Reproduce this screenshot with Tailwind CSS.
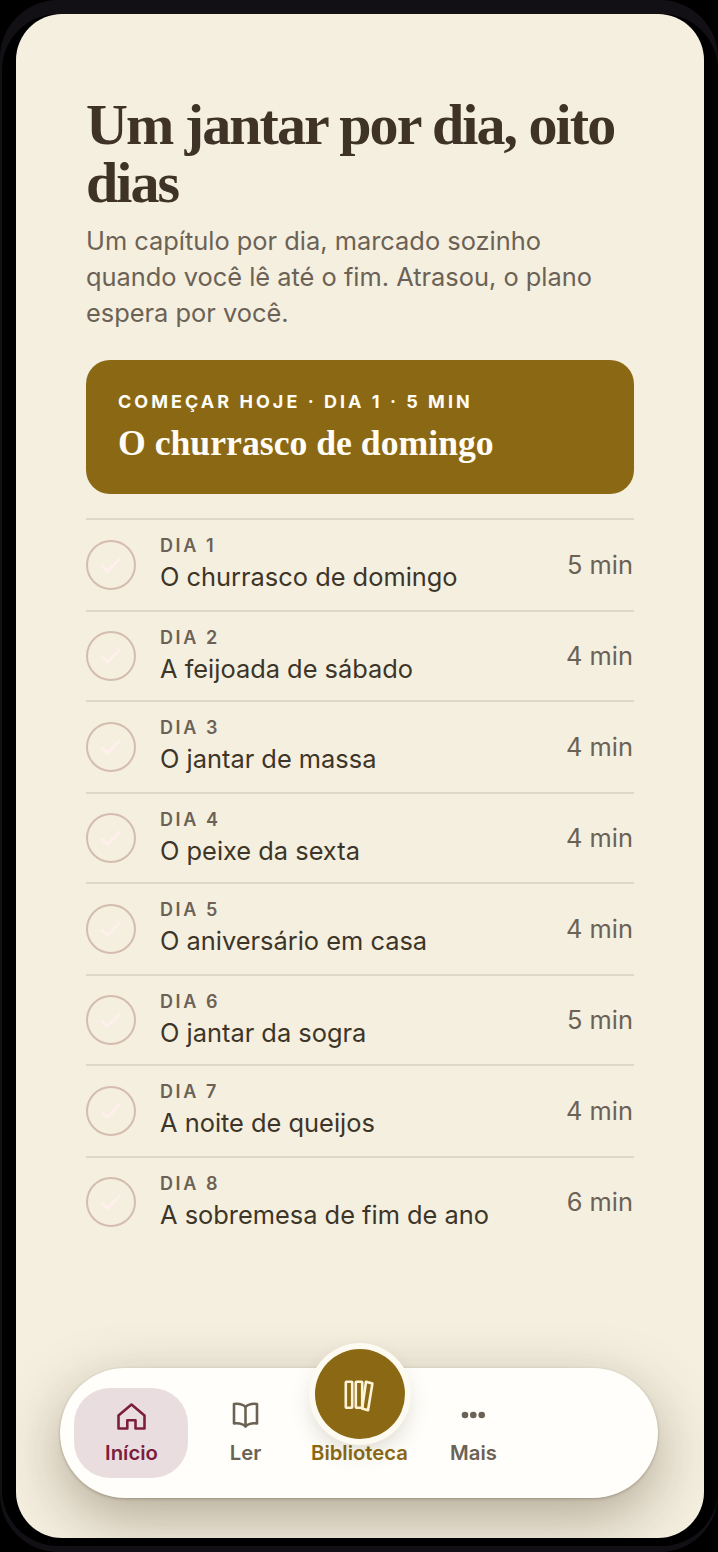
<!DOCTYPE html>
<html lang="pt-BR">
<head>
    <meta charset="UTF-8">
    <meta name="viewport" content="width=device-width, initial-scale=1.0">
    <title>Um jantar por dia, oito dias</title>
    <script src="https://cdn.jsdelivr.net/npm/@tailwindcss/browser@4"></script>
</head>
<body class="bg-black h-[1552px] overflow-hidden font-['Inter','Liberation_Sans',sans-serif]">
    <!-- moldura do aparelho -->
    <div class="h-[1552px] rounded-[58px] bg-[#121014] pt-[14px] pl-[2px] pb-[6px]">
        <div class="h-[1532px] rounded-[56px] bg-black px-[14px] pb-[8px]">
            <!-- tela -->
            <main class="relative h-[1524px] rounded-[46px] overflow-hidden bg-[#f5efe0] px-[70px] pt-[82px]">
                <h1 class="font-['Liberation_Serif',serif] font-bold text-[58px] leading-[58px] tracking-[-1.95px] text-[#3f3226]">Um jantar por dia, oito dias</h1>
                <p class="mt-[11px] text-[25.4px] leading-[36px] text-[#6b6255]">Um capítulo por dia, marcado sozinho quando você lê até o fim. Atrasou, o plano espera por você.</p>

                <div class="mt-[29px] h-[134px] rounded-[24px] bg-[#8b6914] px-[32px] pt-[31px]">
                    <p class="text-[18px] leading-[22px] font-bold tracking-[3.03px] text-[#fffdf6]">COMEÇAR HOJE · DIA 1 · 5 MIN</p>
                    <p class="mt-[8px] font-['Liberation_Serif',serif] font-bold text-[35.7px] leading-[44px] text-[#fffdf6]">O churrasco de domingo</p>
                </div>

                <ul class="mt-[24px]">
                    <li class="flex h-[92px] items-center border-t-2 border-[#ddd7ca]">
                        <span class="flex h-[50px] w-[50px] shrink-0 items-center justify-center rounded-full border-2 border-[#d4bdb0]">
                            <svg class="w-[30px] h-[30px]" viewBox="0 0 24 24" fill="none" stroke="#fff0ec" stroke-width="2.2" stroke-linecap="round" stroke-linejoin="round"><path d="M5 13l4 4 10-10"/></svg>
                        </span>
                        <div class="ml-[24px] flex-1 self-start pt-[15px]">
                            <p class="text-[18px] leading-[22px] font-semibold tracking-[2.6px] text-[#6b6255]">DIA 1</p>
                            <p class="mt-[3.5px] text-[25.4px] leading-[32px] text-[#3d3528]">O churrasco de domingo</p>
                        </div>
                        <span class="mr-[1px] text-[25.4px] text-[#6b6255]">5 min</span>
                    </li>
                    <li class="flex h-[90px] items-center border-t-2 border-[#ddd7ca]">
                        <span class="flex h-[50px] w-[50px] shrink-0 items-center justify-center rounded-full border-2 border-[#d4bdb0]">
                            <svg class="w-[30px] h-[30px]" viewBox="0 0 24 24" fill="none" stroke="#fff0ec" stroke-width="2.2" stroke-linecap="round" stroke-linejoin="round"><path d="M5 13l4 4 10-10"/></svg>
                        </span>
                        <div class="ml-[24px] flex-1 self-start pt-[15px]">
                            <p class="text-[18px] leading-[22px] font-semibold tracking-[2.6px] text-[#6b6255]">DIA 2</p>
                            <p class="mt-[3.5px] text-[25.4px] leading-[32px] text-[#3d3528]">A feijoada de sábado</p>
                        </div>
                        <span class="mr-[1px] text-[25.4px] text-[#6b6255]">4 min</span>
                    </li>
                    <li class="flex h-[92px] items-center border-t-2 border-[#ddd7ca]">
                        <span class="flex h-[50px] w-[50px] shrink-0 items-center justify-center rounded-full border-2 border-[#d4bdb0]">
                            <svg class="w-[30px] h-[30px]" viewBox="0 0 24 24" fill="none" stroke="#fff0ec" stroke-width="2.2" stroke-linecap="round" stroke-linejoin="round"><path d="M5 13l4 4 10-10"/></svg>
                        </span>
                        <div class="ml-[24px] flex-1 self-start pt-[15px]">
                            <p class="text-[18px] leading-[22px] font-semibold tracking-[2.6px] text-[#6b6255]">DIA 3</p>
                            <p class="mt-[3.5px] text-[25.4px] leading-[32px] text-[#3d3528]">O jantar de massa</p>
                        </div>
                        <span class="mr-[1px] text-[25.4px] text-[#6b6255]">4 min</span>
                    </li>
                    <li class="flex h-[90px] items-center border-t-2 border-[#ddd7ca]">
                        <span class="flex h-[50px] w-[50px] shrink-0 items-center justify-center rounded-full border-2 border-[#d4bdb0]">
                            <svg class="w-[30px] h-[30px]" viewBox="0 0 24 24" fill="none" stroke="#fff0ec" stroke-width="2.2" stroke-linecap="round" stroke-linejoin="round"><path d="M5 13l4 4 10-10"/></svg>
                        </span>
                        <div class="ml-[24px] flex-1 self-start pt-[15px]">
                            <p class="text-[18px] leading-[22px] font-semibold tracking-[2.6px] text-[#6b6255]">DIA 4</p>
                            <p class="mt-[3.5px] text-[25.4px] leading-[32px] text-[#3d3528]">O peixe da sexta</p>
                        </div>
                        <span class="mr-[1px] text-[25.4px] text-[#6b6255]">4 min</span>
                    </li>
                    <li class="flex h-[92px] items-center border-t-2 border-[#ddd7ca]">
                        <span class="flex h-[50px] w-[50px] shrink-0 items-center justify-center rounded-full border-2 border-[#d4bdb0]">
                            <svg class="w-[30px] h-[30px]" viewBox="0 0 24 24" fill="none" stroke="#fff0ec" stroke-width="2.2" stroke-linecap="round" stroke-linejoin="round"><path d="M5 13l4 4 10-10"/></svg>
                        </span>
                        <div class="ml-[24px] flex-1 self-start pt-[15px]">
                            <p class="text-[18px] leading-[22px] font-semibold tracking-[2.6px] text-[#6b6255]">DIA 5</p>
                            <p class="mt-[3.5px] text-[25.4px] leading-[32px] text-[#3d3528]">O aniversário em casa</p>
                        </div>
                        <span class="mr-[1px] text-[25.4px] text-[#6b6255]">4 min</span>
                    </li>
                    <li class="flex h-[90px] items-center border-t-2 border-[#ddd7ca]">
                        <span class="flex h-[50px] w-[50px] shrink-0 items-center justify-center rounded-full border-2 border-[#d4bdb0]">
                            <svg class="w-[30px] h-[30px]" viewBox="0 0 24 24" fill="none" stroke="#fff0ec" stroke-width="2.2" stroke-linecap="round" stroke-linejoin="round"><path d="M5 13l4 4 10-10"/></svg>
                        </span>
                        <div class="ml-[24px] flex-1 self-start pt-[15px]">
                            <p class="text-[18px] leading-[22px] font-semibold tracking-[2.6px] text-[#6b6255]">DIA 6</p>
                            <p class="mt-[3.5px] text-[25.4px] leading-[32px] text-[#3d3528]">O jantar da sogra</p>
                        </div>
                        <span class="mr-[1px] text-[25.4px] text-[#6b6255]">5 min</span>
                    </li>
                    <li class="flex h-[92px] items-center border-t-2 border-[#ddd7ca]">
                        <span class="flex h-[50px] w-[50px] shrink-0 items-center justify-center rounded-full border-2 border-[#d4bdb0]">
                            <svg class="w-[30px] h-[30px]" viewBox="0 0 24 24" fill="none" stroke="#fff0ec" stroke-width="2.2" stroke-linecap="round" stroke-linejoin="round"><path d="M5 13l4 4 10-10"/></svg>
                        </span>
                        <div class="ml-[24px] flex-1 self-start pt-[15px]">
                            <p class="text-[18px] leading-[22px] font-semibold tracking-[2.6px] text-[#6b6255]">DIA 7</p>
                            <p class="mt-[3.5px] text-[25.4px] leading-[32px] text-[#3d3528]">A noite de queijos</p>
                        </div>
                        <span class="mr-[1px] text-[25.4px] text-[#6b6255]">4 min</span>
                    </li>
                    <li class="flex h-[90px] items-center border-t-2 border-[#ddd7ca]">
                        <span class="flex h-[50px] w-[50px] shrink-0 items-center justify-center rounded-full border-2 border-[#d4bdb0]">
                            <svg class="w-[30px] h-[30px]" viewBox="0 0 24 24" fill="none" stroke="#fff0ec" stroke-width="2.2" stroke-linecap="round" stroke-linejoin="round"><path d="M5 13l4 4 10-10"/></svg>
                        </span>
                        <div class="ml-[24px] flex-1 self-start pt-[15px]">
                            <p class="text-[18px] leading-[22px] font-semibold tracking-[2.6px] text-[#6b6255]">DIA 8</p>
                            <p class="mt-[3.5px] text-[25.4px] leading-[32px] text-[#3d3528]">A sobremesa de fim de ano</p>
                        </div>
                        <span class="mr-[1px] text-[25.4px] text-[#6b6255]">6 min</span>
                    </li>
                </ul>

                <!-- barra de navegação flutuante -->
                <nav class="absolute left-[44px] top-[1354px] flex h-[130px] w-[598px] rounded-[65px] bg-[#fffefa] px-[14px] pt-[20px] shadow-[0_1px_3px_rgba(60,45,20,0.3),0_20px_60px_rgba(60,45,20,0.36)]">
                    <a class="flex h-[90px] w-[114px] flex-col items-center rounded-[36px] bg-[#e9dde0] pt-[13px] text-[#7b1e3d]">
                        <svg class="h-[32px] w-[32px]" viewBox="0 0 32 32" fill="none" stroke="currentColor" stroke-width="2.6" stroke-linejoin="round"><path d="M3.500 14.500L16.500 3.500 29.500 14.500V27.500H20.500V19.300H12.300V27.500H3.500Z"/></svg>
                        <span class="ml-[1px] mt-[7px] text-[20.3px] leading-[26px] font-semibold">Início</span>
                    </a>
                    <a class="flex h-[90px] w-[114px] flex-col items-center pt-[13px] text-[#6b6255]">
                        <svg class="h-[32px] w-[32px]" viewBox="0 0 32 32" fill="none" stroke="currentColor" stroke-width="2.6" stroke-linejoin="round"><path d="M5 3C9 2.500 13.500 3 16.500 6 19.500 3 24 2.500 28 3V22.500C24 22 19.500 22.500 16.500 25.500 13.500 22.500 9 22 5 22.500ZM16.500 6V25.500"/></svg>
                        <span class="ml-[1px] mt-[7px] text-[20.3px] leading-[26px] font-semibold">Ler</span>
                    </a>
                    <a class="relative flex h-[90px] w-[114px] flex-col items-center pt-[13px] text-[#8b6914]">
                        <span class="absolute left-[13px] top-[-39px] flex h-[90px] w-[90px] items-center justify-center rounded-full bg-[#8b6914] shadow-[0_0_0_6px_#fdfaf1,0_10px_24px_rgba(60,45,20,0.22)]">
                            <svg class="h-[36px] w-[36px]" viewBox="0 0 36 36" fill="none" stroke="#fdf3d7" stroke-width="2.600" stroke-linejoin="round"><rect x="3.800" y="5.800" width="6.400" height="25.900" rx="0.800"/><rect x="13.800" y="5.800" width="6.400" height="25.900" rx="0.800"/><path d="M24 5.800L30.400 7.600 26 34.200 20.200 32.600Z"/></svg>
                        </span>
                        <span class="ml-[1px] mt-[39px] text-[20.3px] leading-[26px] font-semibold">Biblioteca</span>
                    </a>
                    <a class="flex h-[90px] w-[114px] flex-col items-center pt-[13px] text-[#6b6255]">
                        <svg class="h-[32px] w-[32px]" viewBox="0 0 32 32" fill="currentColor"><circle cx="8" cy="14" r="3.300"/><circle cx="16.300" cy="14" r="3.300"/><circle cx="24.700" cy="14" r="3.300"/></svg>
                        <span class="ml-[1px] mt-[7px] text-[20.3px] leading-[26px] font-semibold">Mais</span>
                    </a>
                </nav>
            </main>
        </div>
    </div>
</body>
</html>
